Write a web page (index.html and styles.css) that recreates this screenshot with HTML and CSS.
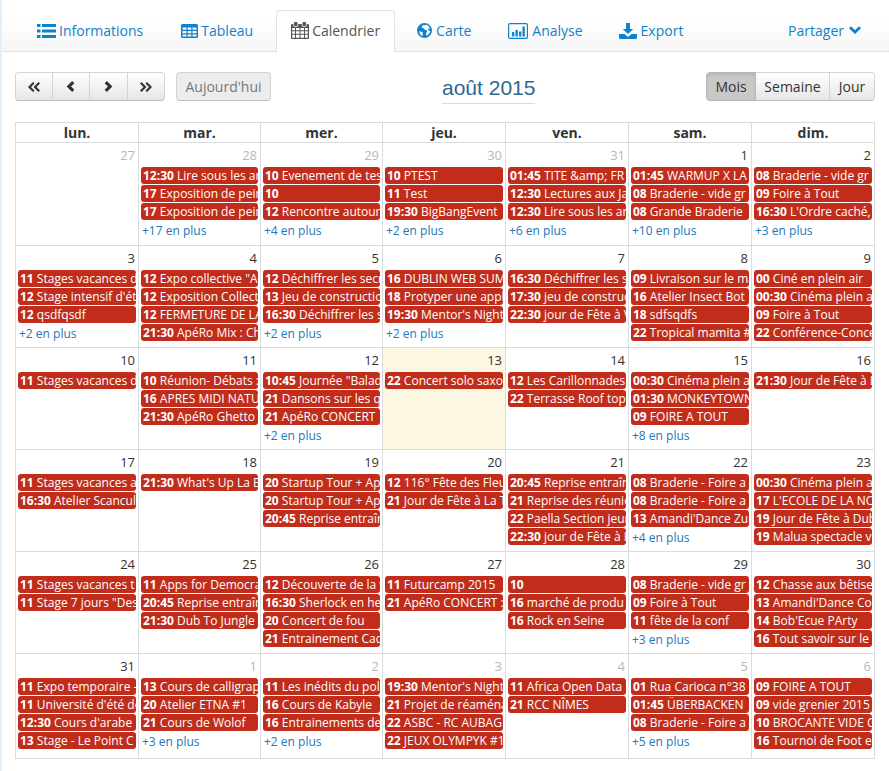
FILE: index.html
```html
<!DOCTYPE html>
<html lang="fr">
<head>
<meta charset="utf-8">
<title>Calendrier</title>
<link rel="stylesheet" href="styles.css">
</head>
<body>
<nav class="tabs">
  <a class="tab wide"><svg class="ico i-list" viewBox="0 0 19 14"><path d="M0 0h3.500v3H0zM5 0h14v3H5zM0 5.500h3.500v3H0zM5 5.500h14v3H5zM0 11h3.500v3H0zM5 11h14v3H5z"/></svg>Informations</a>
  <a class="tab wide"><svg class="ico i-table" viewBox="0 0 17 14"><path fill-rule="evenodd" d="M1.500 0h14A1.500 1.500 0 0 1 17 1.500v11a1.500 1.500 0 0 1-1.500 1.500h-14A1.500 1.500 0 0 1 0 12.500v-11A1.500 1.500 0 0 1 1.500 0zM1.500 3.500v2.300h4V3.500zM6.700 3.500v2.300h3.600V3.500zM11.500 3.500v2.300h4V3.500zM1.500 7v2.200h4V7zM6.700 7v2.200h3.600V7zM11.500 7v2.200h4V7zM1.500 10.400v2.200h4v-2.200zM6.700 10.400v2.200h3.600v-2.200zM11.500 10.400v2.200h4v-2.200z"/></svg>Tableau</a>
  <a class="tab active"><svg class="ico i-cal" viewBox="0 0 18 17"><path fill-rule="evenodd" d="M4 0h1.500a1 1 0 0 1 1 1v2a1 1 0 0 1-1 1H4a1 1 0 0 1-1-1V1a1 1 0 0 1 1-1zM12.500 0H14a1 1 0 0 1 1 1v2a1 1 0 0 1-1 1h-1.500a1 1 0 0 1-1-1V1a1 1 0 0 1 1-1zM1.200 2H2.300v1.200A1.700 1.700 0 0 0 4 4.800h1.500a1.700 1.700 0 0 0 1.700-1.600V2h3.600v1.200a1.700 1.700 0 0 0 1.700 1.600H14a1.700 1.700 0 0 0 1.700-1.600V2h1.100A1.200 1.200 0 0 1 18 3.200v12.600a1.200 1.200 0 0 1-1.200 1.200H1.200A1.200 1.200 0 0 1 0 15.800V3.200A1.200 1.200 0 0 1 1.200 2zM1.200 6v2.300H4V6zM5 6v2.300h3.500V6zM9.500 6v2.300H13V6zM14 6v2.300h2.800V6zM1.200 9.300v2.500H4V9.300zM5 9.300v2.500h3.500V9.300zM9.500 9.300v2.500H13V9.300zM14 9.300v2.500h2.800V9.300zM1.200 12.800v3H4v-3zM5 12.800v3h3.500v-3zM9.500 12.800v3H13v-3zM14 12.800v3h2.800v-3z"/></svg>Calendrier</a>
  <a class="tab"><svg class="ico i-globe" viewBox="0 0 15 15"><path fill-rule="evenodd" d="M7.500 0a7.500 7.500 0 1 1 0 15 7.500 7.500 0 0 1 0-15zM9.500 1.700 8 2.300 6.300 2 4.700 3.500l.3 1.300 1.700.5 1 1.400 1.800.2.600 1.400-.8 1.700-.3 2.100 1.400.4 2.200-2.600.6-1.800-1.300-.4-1-1.500.9-.6 1.200.6-.7-2.300-1.700-1.700zM2.300 8l1.500.7 1.500.4.700 1.500-.6 1.200.6 1.500-1.300-.5L2.900 11z"/></svg>Carte</a>
  <a class="tab"><svg class="ico i-chart" viewBox="0 0 20 16"><path fill-rule="evenodd" d="M2 0h16a2 2 0 0 1 2 2v12a2 2 0 0 1-2 2H2a2 2 0 0 1-2-2V2a2 2 0 0 1 2-2zM2 1.200a.8.800 0 0 0-.8.800v12c0 .4.400.8.800.8h16c.4 0 .8-.4.800-.8V2a.8.800 0 0 0-.8-.8z"/><path d="M4 9h2.300v4.500H4zM7.500 7h2.300v6.500H7.500zM11 8.500h2.300v5H11zM14.500 3.500h2.300v10h-2.300z"/></svg>Analyse</a>
  <a class="tab"><svg class="ico i-dl" viewBox="0 0 18 16"><path d="M7 0h4v6h3.200L9 11 3.800 6H7z"/><path fill-rule="evenodd" d="M0 11h5.500L9 14l3.500-3H18v4a1 1 0 0 1-1 1H1a1 1 0 0 1-1-1z"/></svg>Export</a>
  <a class="share">Partager<svg class="ico-chev" viewBox="0 0 12 8"><path d="M0 2.200 2 .2l4 4 4-4 2 2-6 5.800z"/></svg></a>
</nav>

<main class="cal">
  <div class="toolbar">
    <div class="group">
      <button class="btn nav-btn"><svg viewBox="0 0 12 10"><path d="M5 0 6.500 1.500 3 5l3.500 3.500L5 10 0 5zM10.500 0 12 1.500 8.500 5 12 8.500 10.500 10l-5-5z"/></svg></button>
      <button class="btn nav-btn"><svg class="one" viewBox="0 0 8 10"><path d="M5.500 0 7.500 2 4.500 5l3 3-2 2-5-5z"/></svg></button>
      <button class="btn nav-btn"><svg class="one" viewBox="0 0 8 10"><path d="M2.500 0l5 5-5 5-2-2 3-3-3-3z"/></svg></button>
      <button class="btn nav-btn"><svg viewBox="0 0 12 10"><path d="M1.500 0l5 5-5 5L0 8.500 3.500 5 0 1.500zM7 0l5 5-5 5-1.500-1.500L9 5 5.500 1.500z"/></svg></button>
    </div>
    <button class="btn today">Aujourd'hui</button>
    <h2 class="title">août 2015</h2>
    <div class="group views">
      <button class="btn view on">Mois</button>
      <button class="btn view">Semaine</button>
      <button class="btn view">Jour</button>
    </div>
  </div>

  <div class="grid">
    <div class="head">lun.</div><div class="head">mar.</div><div class="head">mer.</div><div class="head">jeu.</div><div class="head">ven.</div><div class="head">sam.</div><div class="head">dim.</div>

    <div class="day"><span class="num off">27</span></div>
    <div class="day"><span class="num off">28</span>
      <a class="ev"><b>12:30</b> Lire sous les arbres de Paris</a>
      <a class="ev"><b>17</b> Exposition de peinture</a>
      <a class="ev"><b>17</b> Exposition de peinture</a>
      <a class="more">+17 en plus</a></div>
    <div class="day"><span class="num off">29</span>
      <a class="ev"><b>10</b> Evenement de test encore</a>
      <a class="ev"><b>10</b></a>
      <a class="ev"><b>12</b> Rencontre autour de la</a>
      <a class="more">+4 en plus</a></div>
    <div class="day"><span class="num off">30</span>
      <a class="ev"><b>10</b> PTEST</a>
      <a class="ev"><b>11</b> Test</a>
      <a class="ev"><b>19:30</b> BigBangEvent</a>
      <a class="more">+2 en plus</a></div>
    <div class="day"><span class="num off">31</span>
      <a class="ev"><b>01:45</b> TITE &amp;amp; FR</a>
      <a class="ev"><b>12:30</b> Lectures aux Jardins</a>
      <a class="ev"><b>12:30</b> Lire sous les arbres</a>
      <a class="more">+6 en plus</a></div>
    <div class="day"><span class="num">1</span>
      <a class="ev"><b>01:45</b> WARMUP X LA NUIT</a>
      <a class="ev"><b>08</b> Braderie - vide gr</a>
      <a class="ev"><b>08</b> Grande Braderie</a>
      <a class="more">+10 en plus</a></div>
    <div class="day"><span class="num">2</span>
      <a class="ev"><b>08</b> Braderie - vide gr</a>
      <a class="ev"><b>09</b> Foire à Tout</a>
      <a class="ev"><b>16:30</b> L'Ordre caché, suite</a>
      <a class="more">+3 en plus</a></div>

    <div class="day"><span class="num">3</span>
      <a class="ev"><b>11</b> Stages vacances d'été</a>
      <a class="ev"><b>12</b> Stage intensif d'été</a>
      <a class="ev"><b>12</b> qsdfqsdf</a>
      <a class="more">+2 en plus</a></div>
    <div class="day"><span class="num">4</span>
      <a class="ev"><b>12</b> Expo collective "Art"</a>
      <a class="ev"><b>12</b> Exposition Collective</a>
      <a class="ev"><b>12</b> FERMETURE DE LA</a>
      <a class="ev"><b>21:30</b> ApéRo Mix : Chez</a></div>
    <div class="day"><span class="num">5</span>
      <a class="ev"><b>12</b> Déchiffrer les secrets</a>
      <a class="ev"><b>13</b> Jeu de construction</a>
      <a class="ev"><b>16:30</b> Déchiffrer les secrets</a>
      <a class="more">+2 en plus</a></div>
    <div class="day"><span class="num">6</span>
      <a class="ev"><b>16</b> DUBLIN WEB SUMMIT</a>
      <a class="ev"><b>18</b> Protyper une application</a>
      <a class="ev"><b>19:30</b> Mentor's Night Paris</a>
      <a class="more">+2 en plus</a></div>
    <div class="day"><span class="num">7</span>
      <a class="ev"><b>16:30</b> Déchiffrer les secrets</a>
      <a class="ev"><b>17:30</b> jeu de construction</a>
      <a class="ev"><b>22:30</b> jour de Fête à Vincennes</a></div>
    <div class="day"><span class="num">8</span>
      <a class="ev"><b>09</b> Livraison sur le marché</a>
      <a class="ev"><b>16</b> Atelier Insect Bot</a>
      <a class="ev"><b>18</b> sdfsqdfs</a>
      <a class="ev"><b>22</b> Tropical mamita #4 soir</a></div>
    <div class="day"><span class="num">9</span>
      <a class="ev"><b>00</b> Ciné en plein air</a>
      <a class="ev"><b>00:30</b> Cinéma plein air</a>
      <a class="ev"><b>09</b> Foire à Tout</a>
      <a class="ev"><b>22</b> Conférence-Concert</a></div>

    <div class="day"><span class="num">10</span>
      <a class="ev"><b>11</b> Stages vacances d'été</a></div>
    <div class="day"><span class="num">11</span>
      <a class="ev"><b>10</b> Réunion- Débats : la</a>
      <a class="ev"><b>16</b> APRES MIDI NATURE</a>
      <a class="ev"><b>21:30</b> ApéRo Ghetto Blaster</a></div>
    <div class="day"><span class="num">12</span>
      <a class="ev"><b>10:45</b> Journée "Balade"</a>
      <a class="ev"><b>21</b> Dansons sur les quais</a>
      <a class="ev"><b>21</b> ApéRo CONCERT</a>
      <a class="more">+2 en plus</a></div>
    <div class="day today-cell"><span class="num">13</span>
      <a class="ev"><b>22</b> Concert solo saxo</a></div>
    <div class="day"><span class="num">14</span>
      <a class="ev"><b>12</b> Les Carillonnades</a>
      <a class="ev"><b>22</b> Terrasse Roof top</a></div>
    <div class="day"><span class="num">15</span>
      <a class="ev"><b>00:30</b> Cinéma plein a</a>
      <a class="ev"><b>01:30</b> MONKEYTOWN Paris</a>
      <a class="ev"><b>09</b> FOIRE A TOUT</a>
      <a class="more">+8 en plus</a></div>
    <div class="day"><span class="num">16</span>
      <a class="ev"><b>21:30</b> Jour de Fête à La Tour</a></div>

    <div class="day"><span class="num">17</span>
      <a class="ev"><b>11</b> Stages vacances a</a>
      <a class="ev"><b>16:30</b> Atelier Scancul Paris</a></div>
    <div class="day"><span class="num">18</span>
      <a class="ev"><b>21:30</b> What's Up La Bellevilloise</a></div>
    <div class="day"><span class="num">19</span>
      <a class="ev"><b>20</b> Startup Tour + Apéro</a>
      <a class="ev"><b>20</b> Startup Tour + Apéro</a>
      <a class="ev"><b>20:45</b> Reprise entraînement</a></div>
    <div class="day"><span class="num">20</span>
      <a class="ev"><b>12</b> 116° Fête des Fleurs</a>
      <a class="ev"><b>21</b> Jour de Fête à La Tour</a></div>
    <div class="day"><span class="num">21</span>
      <a class="ev"><b>20:45</b> Reprise entraînement</a>
      <a class="ev"><b>21</b> Reprise des réunions</a>
      <a class="ev"><b>22</b> Paella Section jeunes</a>
      <a class="ev"><b>22:30</b> jour de Fête à La Tour</a></div>
    <div class="day"><span class="num">22</span>
      <a class="ev"><b>08</b> Braderie - Foire a</a>
      <a class="ev"><b>08</b> Braderie - Foire a</a>
      <a class="ev"><b>13</b> Amandi'Dance Zumba</a>
      <a class="more">+4 en plus</a></div>
    <div class="day"><span class="num">23</span>
      <a class="ev"><b>00:30</b> Cinéma plein a</a>
      <a class="ev"><b>17</b> L'ECOLE DE LA NOTE</a>
      <a class="ev"><b>19</b> Jour de Fête à Dublin</a>
      <a class="ev"><b>19</b> Malua spectacle vivant</a></div>

    <div class="day"><span class="num">24</span>
      <a class="ev"><b>11</b> Stages vacances t</a>
      <a class="ev"><b>11</b> Stage 7 jours "Des</a></div>
    <div class="day"><span class="num">25</span>
      <a class="ev"><b>11</b> Apps for Democra</a>
      <a class="ev"><b>20:45</b> Reprise entraînement</a>
      <a class="ev"><b>21:30</b> Dub To Jungle</a></div>
    <div class="day"><span class="num">26</span>
      <a class="ev"><b>12</b> Découverte de la ville</a>
      <a class="ev"><b>16:30</b> Sherlock en herbe</a>
      <a class="ev"><b>20</b> Concert de fou</a>
      <a class="ev"><b>21</b> Entrainement Cadets</a></div>
    <div class="day"><span class="num">27</span>
      <a class="ev"><b>11</b> Futurcamp 2015</a>
      <a class="ev"><b>21</b> ApéRo CONCERT :</a></div>
    <div class="day"><span class="num">28</span>
      <a class="ev"><b>10</b></a>
      <a class="ev"><b>16</b> marché de produ</a>
      <a class="ev"><b>16</b> Rock en Seine</a></div>
    <div class="day"><span class="num">29</span>
      <a class="ev"><b>08</b> Braderie - vide gr</a>
      <a class="ev"><b>09</b> Foire à Tout</a>
      <a class="ev"><b>11</b> fête de la conf</a>
      <a class="more">+3 en plus</a></div>
    <div class="day"><span class="num">30</span>
      <a class="ev"><b>12</b> Chasse aux bêtise</a>
      <a class="ev"><b>13</b> Amandi'Dance Country</a>
      <a class="ev"><b>14</b> Bob'Ecue PArty</a>
      <a class="ev"><b>16</b> Tout savoir sur le</a></div>

    <div class="day"><span class="num">31</span>
      <a class="ev"><b>11</b> Expo temporaire - été</a>
      <a class="ev"><b>11</b> Université d'été de la</a>
      <a class="ev"><b>12:30</b> Cours d'arabe</a>
      <a class="ev"><b>13</b> Stage - Le Point C</a></div>
    <div class="day"><span class="num off">1</span>
      <a class="ev"><b>13</b> Cours de calligraphie</a>
      <a class="ev"><b>20</b> Atelier ETNA #1</a>
      <a class="ev"><b>21</b> Cours de Wolof</a>
      <a class="more">+3 en plus</a></div>
    <div class="day"><span class="num off">2</span>
      <a class="ev"><b>11</b> Les inédits du polar</a>
      <a class="ev"><b>16</b> Cours de Kabyle</a>
      <a class="ev"><b>16</b> Entrainements de foot</a>
      <a class="more">+2 en plus</a></div>
    <div class="day"><span class="num off">3</span>
      <a class="ev"><b>19:30</b> Mentor's Night Paris</a>
      <a class="ev"><b>21</b> Projet de réaménagement</a>
      <a class="ev"><b>22</b> ASBC - RC AUBAGNE</a>
      <a class="ev"><b>22</b> JEUX OLYMPYK #1</a></div>
    <div class="day"><span class="num off">4</span>
      <a class="ev"><b>11</b> Africa Open Data</a>
      <a class="ev"><b>21</b> RCC NÎMES</a></div>
    <div class="day"><span class="num off">5</span>
      <a class="ev"><b>01</b> Rua Carioca n°38</a>
      <a class="ev"><b>01:45</b> ÜBERBACKEN</a>
      <a class="ev"><b>08</b> Braderie - Foire a</a>
      <a class="more">+5 en plus</a></div>
    <div class="day"><span class="num off">6</span>
      <a class="ev"><b>09</b> FOIRE A TOUT</a>
      <a class="ev"><b>09</b> vide grenier 2015</a>
      <a class="ev"><b>10</b> BROCANTE VIDE GRENIER</a>
      <a class="ev"><b>16</b> Tournoi de Foot e</a></div>
  </div>
</main>
</body>
</html>
```
FILE: styles.css
```css
* { box-sizing: border-box; }
html, body { margin: 0; height: 100%; }
body {
  width: 889px;
  height: 771px;
  overflow: hidden;
  background: #fff;
  border-left: 2px solid #e2f0fb;
  font-family: "Open Sans", sans-serif;
  font-size: 14px;
  color: #333;
}
.tabs {
  display: flex;
  height: 52px;
  padding: 10px 28px 0 20px;
  background: linear-gradient(#fff 40%, #f6f6f6);
  border-bottom: 1px solid #e2e2e2;
}
.tab {
  display: flex;
  align-items: center;
  height: 42px;
  padding: 0 14px 2px;
  margin-right: 7px;
  border: 1px solid transparent;
  border-bottom: 0;
  color: #0f83c9;
  white-space: nowrap;
}
.tab.wide { margin-right: 8px; }
.tab svg { fill: currentColor; margin-right: 3px; display: block; }
.tab.active {
  background: #fff;
  border-color: #e2e2e2;
  border-radius: 4px 4px 0 0;
  color: #555;
}
.i-list { width: 19px; height: 14px; }
.i-table { width: 17px; height: 14px; }
.i-cal { width: 18px; height: 17px; }
.i-globe { width: 15px; height: 15px; margin-right: 4px !important; }
.i-chart { width: 20px; height: 16px; margin-right: 4px !important; }
.i-dl { width: 18px; height: 16px; margin: 0 4px 0 -1px !important; }
.share {
  display: flex;
  align-items: center;
  height: 42px;
  padding-bottom: 2px;
  margin-left: auto;
  color: #0f83c9;
}
.ico-chev { width: 12px; height: 8px; margin-left: 5px; fill: currentColor; }

.cal { padding: 20px 14px 0 13px; }
.toolbar {
  display: flex;
  align-items: center;
  height: 29px;
  margin-bottom: 21px;
}
.group { display: flex; }
.btn {
  height: 29px;
  margin: 0;
  padding: 0;
  font: 14px "Open Sans", sans-serif;
  color: #333;
  background: linear-gradient(#fff, #e6e6e6);
  border: 1px solid #d4d4d4;
  border-bottom-color: #bdbdbd;
  border-left-width: 0;
}
.group .btn:first-child { border-left-width: 1px; border-radius: 4px 0 0 4px; }
.group .btn:last-child { border-radius: 0 4px 4px 0; }
.nav-btn { width: 37.500px; display: flex; align-items: center; justify-content: center; }
.nav-btn svg { width: 12px; height: 10px; fill: #333; display: block; }
.nav-btn svg.one { width: 9px; height: 11px; }
.today {
  width: 95px;
  margin-left: 11px;
  border-left-width: 1px;
  border-radius: 4px;
  color: #777;
  background: #ececec;
}
.title {
  margin: 2px 0 0 171px;
  padding: 0 0 1px;
  width: 93px;
  height: 32px;
  font: 400 21px/31px "Liberation Sans", sans-serif;
  color: #2e688f;
  text-align: center;
  white-space: nowrap;
  border-bottom: 1px solid #dcdcdc;
}
.views { margin-left: auto; }
.view { width: 74px; }
.view:first-child { width: 50px; }
.view:last-child { width: 45px; }
.view.on { background: #c8c8c8; border-color: #b6b6b6; box-shadow: inset 0 2px 3px rgba(0,0,0,.08); }

.grid {
  display: grid;
  grid-template-columns: 123px 122px 122px 123px 123px 123px 123px;
  grid-template-rows: 20px 103px 102px 102px 102px 102px 105px;
  width: 860px;
  border-left: 1px solid #dcdcdc;
  border-top: 1px solid #dcdcdc;
}
.head {
  border-right: 1px solid #dcdcdc;
  border-bottom: 1px solid #dcdcdc;
  font-weight: 700;
  font-size: 14px;
  line-height: 19px;
  text-align: center;
}
.day {
  display: flex;
  flex-direction: column;
  min-width: 0;
  padding: 0 2px;
  border-right: 1px solid #dcdcdc;
  border-bottom: 1px solid #dcdcdc;
  overflow: hidden;
}
.today-cell { background: #fcf7e3; }
.num {
  height: 24px;
  padding: 3px 1px 0 0;
  text-align: right;
  font-size: 13px;
  line-height: 19px;
  color: #333;
}
.num.off { color: #b8b8b8; }
.ev {
  display: block;
  flex: none;
  height: 17px;
  margin-bottom: 1px;
  padding: 0 2px;
  background: #c22d1b;
  border-radius: 3px;
  color: #fff;
  font-size: 12px;
  font-weight: 500;
  line-height: 17px;
  white-space: nowrap;
  overflow: hidden;
}
.ev b { font-weight: 700; }
.more {
  display: block;
  padding-left: 1px;
  font-size: 12px;
  line-height: 19px;
  color: #2277bb;
}
```
